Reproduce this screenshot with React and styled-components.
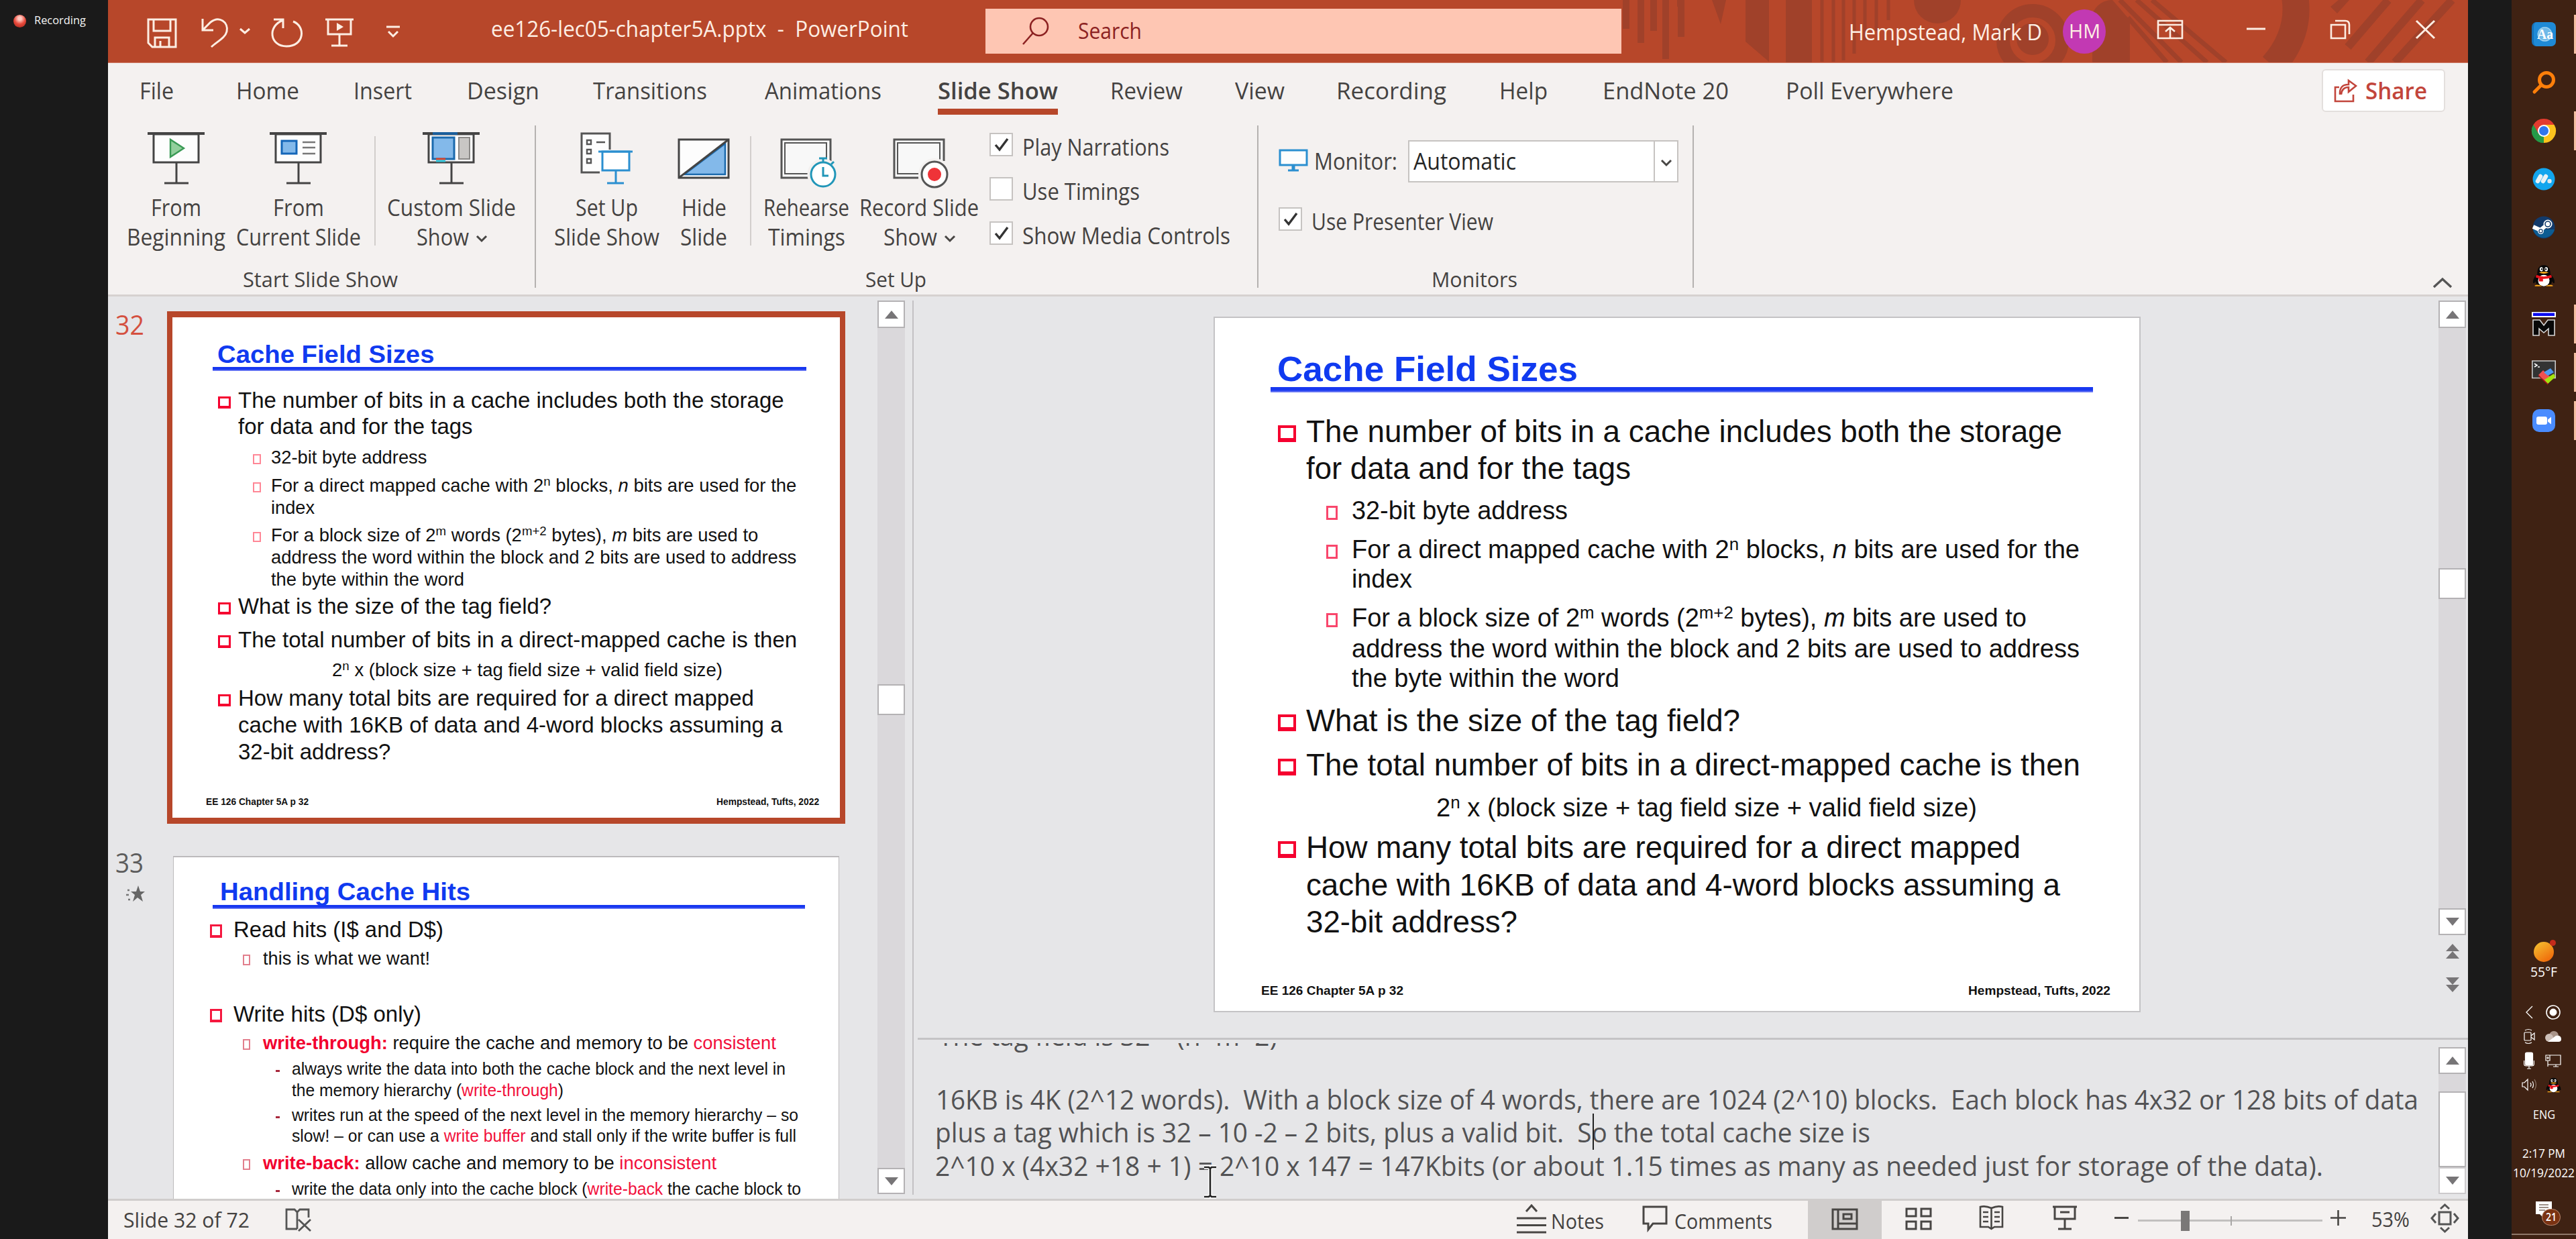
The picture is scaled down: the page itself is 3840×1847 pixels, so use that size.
import React, { useLayoutEffect, useRef, useState } from "react";
import styled, { createGlobalStyle, css } from "styled-components";

const UI = '"Open Sans", "Noto Sans", sans-serif';
const ARIAL = '"Liberation Sans", Arial, sans-serif';

const Global = createGlobalStyle`
  * { box-sizing: border-box; }
  html, body { margin: 0; padding: 0; background: #1a1a1a; }
  body { font-family: ${UI}; overflow: hidden; }
  :root { --u: 1px; }
`;

/* ---------- text that fills a known measure ---------- */
const TextBox = styled.span`
  display: block;
  flex: none;
  width: calc(var(--u) * ${(p) => p.$w});
  margin-left: calc(var(--u) * ${(p) => p.$ml || 0});
  margin-top: calc(var(--u) * ${(p) => p.$mt || 0});
  font-size: calc(var(--u) * ${(p) => p.$fs || 34});
  line-height: calc(var(--u) * ${(p) => p.$lh || 44});
  height: calc(var(--u) * ${(p) => p.$lh || 44});
  font-weight: ${(p) => p.$weight || 400};
  color: ${(p) => p.$color || "inherit"};
  white-space: pre;
`;
const TextRun = styled.span`
  display: inline-block;
  transform-origin: 0 50%;
  sup { font-size: 0.68em; line-height: 0; vertical-align: 0.46em; }
  em { font-style: italic; }
  b { color: #f2002e; }
  i { font-style: normal; color: #f2103c; }
`;
function T({ w, ml, mt, fs, lh, weight, color, children }) {
  const box = useRef(null);
  const run = useRef(null);
  const [k, setK] = useState(1);
  useLayoutEffect(() => {
    const target = parseFloat(getComputedStyle(box.current).width);
    const natural = parseFloat(getComputedStyle(run.current).width);
    if (natural > 0) setK(target / natural);
  }, []);
  return (
    <TextBox ref={box} $w={w} $ml={ml} $mt={mt} $fs={fs} $lh={lh} $weight={weight} $color={color}>
      <TextRun ref={run} style={{ transform: `scaleX(${k})` }}>{children}</TextRun>
    </TextBox>
  );
}

const Icon = styled.svg`
  display: block;
  flex: none;
  overflow: visible;
  margin-left: ${(p) => p.$ml || 0}px;
  margin-top: ${(p) => p.$mt || 0}px;
  fill: none;
`;

/* ---------- page frame ---------- */
const Desktop = styled.div`
  display: grid;
  grid-template-columns: 161px 3518px 65px 96px;
  width: 3840px;
  height: 1847px;
  background: #1a1a1a;
`;
const RecordingStrip = styled.aside`
  display: flex;
  padding: 18px 0 0 20px;
  color: #f4f4f4;
`;
const RecDot = styled.span`
  width: 19px;
  height: 19px;
  margin: 4px 12px 0 0;
  border-radius: 50%;
  background: radial-gradient(circle at 50% 30%, #ffc9c0 0 15%, #e8493b 50%, #9c2319 100%);
`;
const Window = styled.main`
  display: flex;
  flex-direction: column;
  height: 1847px;
  overflow: hidden;
  background: #f4f1f0;
  color: #444241;
`;

/* ---------- title bar ---------- */
const TitleBar = styled.header`
  position: relative;
  display: flex;
  align-items: flex-start;
  height: 94px;
  background: #b7472a;
  border-bottom: 1px solid #cf7d68;
  color: #fdeee3;
`;
const Pattern = styled.svg`
  position: absolute;
  left: 2256px;
  top: 0;
  width: 1262px;
  height: 93px;
`;
const QuickAccess = styled.div`
  position: relative;
  display: flex;
  padding-left: 58px;
  width: 571px;
`;
const SearchBox = styled.div`
  position: relative;
  display: flex;
  width: 948px;
  height: 67px;
  margin: 13px 0 0 115px;
  background: #fec6b3;
`;
const Account = styled.div`
  position: relative;
  display: flex;
  margin-left: 339px;
`;
const Avatar = styled.span`
  display: flex;
  justify-content: center;
  width: 64px;
  height: 66px;
  margin: 14px 0 0 31px;
  border-radius: 50%;
  background: #c239b3;
`;

function TitlePattern() {
  return (
    <Pattern viewBox="2417 0 1262 93" fill="none">
      <g stroke="#a0412a" strokeWidth="10">
        <path d="M2424 0V43M2446 0V64M2465 0V46M2483 0V88M2506 0V55" />
        <path d="M2716 0V92M2733 0V92M2748 0V90M2764 0V80M2780 0V60M2797 0V46M2815 0V30" strokeWidth="5" />
        <path d="M3185 0L3290 93M3208 0L3318 93M3160 0L3252 93M3172 26L3230 93" strokeWidth="7" />
        <path d="M3530 93L3610 0M3570 93L3655 0M3500 70L3560 0" strokeWidth="12" />
      </g>
      <g fill="#a0412a">
        <path d="M2552 0h21l-8 36zM2602 0h35v92l-35-30zM2662 0h39v93h-39zM2500 0h8v10h-8z" />
        <circle cx="2888" cy="0" r="35" />
        <path d="M3119 93V20q10-20 30-20l26 30V93z" />
        <path d="M3474 10L3486 0h16l-18 20z" />
      </g>
      <circle cx="3030" cy="60" r="44" stroke="#a0412a" strokeWidth="20" />
      <circle cx="3030" cy="58" r="24" fill="#a0412a" />
      <path d="M3421 -5Q3430 50 3388 98" stroke="#a0412a" strokeWidth="40" />
    </Pattern>
  );
}

function TitleRow() {
  return (
    <TitleBar>
      <TitlePattern />
      <QuickAccess>
        <Icon width="45" height="45" $mt={27} stroke="#fdeee3" strokeWidth="3">
          <path d="M2 2H43V43H8L2 37ZM10 2V19H35V2M12 43V29H33V43M20 43V34" />
        </Icon>
        <Icon width="42" height="44" $ml={35} $mt={27} stroke="#fdeee3" strokeWidth="3">
          <path d="M3 1V18H19M3 18L15 6C28 -4 42 6 39 20C37 29 26 34 16 43" />
        </Icon>
        <Icon width="16" height="8" $ml={16} $mt={42} stroke="#fdeee3" strokeWidth="3">
          <path d="M1 1L8 7L15 1" />
        </Icon>
        <Icon width="47" height="44" $ml={31} $mt={27} stroke="#fdeee3" strokeWidth="3">
          <path d="M4 2H18V15M18 3C-6 12 -2 42 23 42C50 42 52 12 33 5" />
        </Icon>
        <Icon width="42" height="42" $ml={34} $mt={27} stroke="#fdeee3" strokeWidth="3">
          <path d="M0 2H42M4 2V24H38V2M21 24V41M9 41H33" />
          <path d="M17 7V19L27 13Z" fill="#fdeee3" stroke="none" />
        </Icon>
        <Icon width="20" height="18" $ml={49} $mt={38} stroke="#fdeee3" strokeWidth="3">
          <path d="M0 2H20M3 9L10 16L17 9" />
        </Icon>
      </QuickAccess>
      <T w={622} mt={21} fs={32}>{"ee126-lec05-chapter5A.pptx  -  PowerPoint"}</T>
      <SearchBox>
        <Icon width="40" height="42" $ml={55} $mt={13} stroke="#8c2222" strokeWidth="2.6">
          <circle cx="25" cy="14" r="13" />
          <path d="M16 23L1 40" />
        </Icon>
        <T w={95} ml={43} mt={11} fs={33} color="#8c2222">Search</T>
      </SearchBox>
      <Account>
        <T w={288} mt={26} fs={33}>Hempstead, Mark D</T>
        <Avatar><T w={47} mt={10} fs={30}>HM</T></Avatar>
        <Icon width="38" height="28" $ml={77} $mt={30} stroke="#fdeee3" strokeWidth="2.6">
          <path d="M1 1H37V27H1ZM1 7H37M19 26V11M12 17L19 11L26 17" />
        </Icon>
        <Icon width="28" height="4" $ml={95} $mt={41} stroke="#fdeee3" strokeWidth="3"><path d="M0 2H28" /></Icon>
        <Icon width="30" height="28" $ml={97} $mt={30} stroke="#fdeee3" strokeWidth="2.6">
          <path d="M1 7H22V27H1ZM7 1H22Q28 1 28 7V21" />
        </Icon>
        <Icon width="29" height="27" $ml={97} $mt={30} stroke="#fdeee3" strokeWidth="3"><path d="M1 1L28 27M28 1L1 27" /></Icon>
      </Account>
    </TitleBar>
  );
}

/* ---------- tabs ---------- */
const TabRow = styled.nav`
  display: flex;
  height: 93px;
  flex: none;
`;
const Tab = styled.div`
  flex: none;
  margin-left: ${(p) => p.$gap}px;
  padding-top: 19px;
  &::after {
    content: "";
    display: block;
    height: 9px;
    margin-top: 4px;
    background: ${(p) => (p.$active ? "#b7472a" : "transparent")};
  }
`;
const ShareButton = styled.button`
  display: flex;
  flex: none;
  width: 184px;
  height: 64px;
  margin: 9px 0 0 549px;
  padding: 0;
  border: 2px solid #e3dfdd;
  border-radius: 6px;
  background: #fff;
  font-family: ${UI};
`;
const tabs = [
  ["File", 47, 51], ["Home", 93, 94], ["Insert", 81, 87], ["Design", 82, 108],
  ["Transitions", 80, 170], ["Animations", 86, 174], ["Slide Show", 84, 179],
  ["Review", 78, 108], ["View", 78, 74], ["Recording", 77, 164], ["Help", 79, 72],
  ["EndNote 20", 82, 188], ["Poll Everywhere", 85, 250],
];
function Tabs() {
  return (
    <TabRow>
      {tabs.map(([label, gap, w]) => (
        <Tab key={label} $gap={gap} $active={label === "Slide Show"}>
          <T w={w} lh={45} fs={34} weight={label === "Slide Show" ? 600 : 400}>{label}</T>
        </Tab>
      ))}
      <ShareButton>
        <Icon width="33" height="33" $ml={17} $mt={14} stroke="#c2453b" strokeWidth="2.6">
          <path d="M7 11H1V32H28V22M10 22Q11 11 21 11V18L32 9L21 1V7Q7 7 8 22" />
        </Icon>
        <T w={92} ml={13} mt={8} fs={34} weight={600} color="#c2453b">Share</T>
      </ShareButton>
    </TabRow>
  );
}

/* ---------- ribbon ---------- */
const Ribbon = styled.section`
  display: flex;
  flex: none;
  height: 255px;
  border-bottom: 3px solid #d6d2d0;
`;
const Group = styled.div`
  display: flex;
  flex-direction: column;
  flex: none;
  align-items: center;
  width: ${(p) => p.$w}px;
  padding-right: 3px;
`;
const GroupBody = styled.div`
  display: flex;
  flex: none;
  width: 100%;
  height: 209px;
  padding-left: ${(p) => p.$pad}px;
`;
const GroupRule = styled.i`
  flex: none;
  width: 2px;
  height: 242px;
  background: #b5b2b0;
`;
const InnerRule = styled.i`
  flex: none;
  width: 2px;
  height: 163px;
  margin: 16px 0 0 ${(p) => p.$ml}px;
  background: #d2cecc;
`;
const Command = styled.div`
  display: flex;
  flex-direction: column;
  flex: none;
  align-items: center;
  width: ${(p) => p.$w}px;
  margin-left: ${(p) => p.$ml || 0}px;
  padding-top: 10px;
`;
const Glyph = styled.div`
  display: flex;
  justify-content: center;
  height: 90px;
  margin-left: -1px;
`;
const LabelRow = styled.div`
  display: flex;
  height: 44px;
`;
const Checks = styled.div`
  display: flex;
  flex-direction: column;
  gap: 22px;
  margin-left: 16px;
  padding-top: 10px;
`;
const CheckRow = styled.label`
  display: flex;
  align-items: flex-start;
  height: 44px;
`;
const Box = styled.span`
  display: block;
  flex: none;
  width: 35px;
  height: 35px;
  margin: 1px 14px 0 0;
  border: 2px solid #c6c3c1;
  background: #fff;
`;
const MonitorPane = styled.div`
  display: flex;
  flex-direction: column;
`;
const MonitorRow = styled.div`
  display: flex;
  height: 121px;
  padding-top: 22px;
`;
const Combo = styled.div`
  display: flex;
  width: 403px;
  height: 63px;
  margin-left: 16px;
  border: 2px solid #c6c3c1;
  background: #fff;
  color: #262626;
`;
const ComboArrow = styled.span`
  display: flex;
  width: 36px;
  margin-left: 205px;
  border-left: 2px solid #c6c3c1;
`;
const Collapse = styled.div`
  margin: 227px 0 0 1102px;
`;

const Chevron = ({ ml, mt, w = 16, s = 3 }) => (
  <Icon width={w} height="9" $ml={ml} $mt={mt} stroke="#484644" strokeWidth={s}>
    <path d={`M1 1L${w / 2} 8L${w - 1} 1`} />
  </Icon>
);
const Check = ({ on, w, children }) => (
  <CheckRow>
    <Box>
      {on && (
        <Icon width="31" height="31" stroke="#333" strokeWidth="3.4"><path d="M7 16L13 23L25 7" /></Icon>
      )}
    </Box>
    <T w={w}>{children}</T>
  </CheckRow>
);

const Easel = ({ children }) => (
  <Icon width="85" height="78" stroke="#444" strokeWidth="3">
    <path d="M9 3H76V45H9Z" fill="#fdfdfd" />
    <path d="M0 2H85" strokeWidth="4" />
    <path d="M43 46V76M25 76H61" />
    {children}
  </Icon>
);

function RibbonBody() {
  return (
    <Ribbon>
      <Group $w={636}>
        <GroupBody $pad={28}>
          <Command $w={147}>
            <Glyph><Easel><path d="M34 11V37L54 24Z" fill="#92cf9c" stroke="#3a9a55" strokeWidth="2.4" /></Easel></Glyph>
            <T w={75}>From</T>
            <T w={147}>Beginning</T>
          </Command>
          <Command $w={186} $ml={16}>
            <Glyph>
              <Easel>
                <path d="M18 13H40V32H18Z" fill="#83b9ea" stroke="#1466b8" />
                <path d="M49 15H68M49 23H68M49 32H68" stroke="#777" strokeWidth="2.4" />
              </Easel>
            </Glyph>
            <T w={76}>From</T>
            <T w={186}>Current Slide</T>
          </Command>
          <InnerRule $ml={20} />
          <Command $w={192} $ml={17}>
            <Glyph>
              <Easel>
                <path d="M15 8H47V40H15Z" fill="#83b9ea" stroke="#1b6aad" />
                <path d="M54 8H70V40H54Z" fill="#c8c6c4" stroke="#8b8987" strokeWidth="2" />
                <path d="M15 2H52" stroke="#1b5f9c" strokeWidth="4" />
                <path d="M20 40H34" stroke="#d8432b" />
                <path d="M20 43H34" stroke="#35c9dd" />
              </Easel>
            </Glyph>
            <T w={192}>Custom Slide</T>
            <LabelRow><T w={78}>Show</T><Chevron ml={11} mt={20} /></LabelRow>
          </Command>
        </GroupBody>
        <T w={231} fs={31} lh={40}>Start Slide Show</T>
      </Group>
      <GroupRule />
      <Group $w={1075}>
        <GroupBody $pad={27}>
          <Command $w={157}>
            <Glyph>
              <Icon width="78" height="78" stroke="#555" strokeWidth="3">
                <path d="M29 60H2V2H44V26" fill="#fdfdfd" />
                <path d="M10 12H16V18H10ZM10 26H16V32H10ZM10 40H16V46H10ZM24 15H37" strokeWidth="2.4" />
                <g stroke="#2b8fd0"><path d="M33 29H73V57H33Z" fill="#fff" /><path d="M27 29H78M53 57V76M40 76H65" /></g>
              </Icon>
            </Glyph>
            <T w={93}>Set Up</T>
            <T w={157}>Slide Show</T>
          </Command>
          <Command $w={78} $ml={27}>
            <Glyph>
              <Icon width="78" height="61" $mt={9} strokeWidth="3">
                <path d="M2 2H76V59H2Z" fill="#fdfdfd" stroke="#444" />
                <path d="M10 54L71 8V54Z" fill="#83b9ea" stroke="#1b6aad" strokeWidth="2.6" />
                <path d="M2 59L76 2" stroke="#444" />
              </Icon>
            </Glyph>
            <T w={67}>Hide</T>
            <T w={70}>Slide</T>
          </Command>
          <InnerRule $ml={30} />
          <Command $w={128} $ml={18}>
            <Glyph>
              <Icon width="84" height="74" $ml={6} $mt={9} stroke="#555" strokeWidth="3">
                <path d="M44 59H2V2H75V36" fill="#f8f8f8" />
                <path d="M42 53H7V7H69V34" strokeWidth="2" />
                <g stroke="#2196b8">
                  <circle cx="64" cy="54" r="22" fill="#f4f1f0" stroke="#f4f1f0" />
                  <circle cx="64" cy="54" r="18" fill="#fff" />
                  <path d="M64 35V29M58 30H70M76 39L80 35M64 43V56H72" />
                </g>
              </Icon>
            </Glyph>
            <T w={128}>Rehearse</T>
            <T w={115}>Timings</T>
          </Command>
          <Command $w={178} $ml={15}>
            <Glyph>
              <Icon width="83" height="74" $ml={5} $mt={9} stroke="#555" strokeWidth="3">
                <path d="M38 59H2V2H76V34" fill="#f8f8f8" />
                <path d="M38 53H7V7H70V34" strokeWidth="2" />
                <circle cx="62" cy="54" r="24" fill="#f4f1f0" stroke="none" />
                <circle cx="62" cy="54" r="19" fill="#fff" />
                <circle cx="62" cy="54" r="10" fill="#ef3338" stroke="none" />
              </Icon>
            </Glyph>
            <T w={178}>Record Slide</T>
            <LabelRow><T w={80}>Show</T><Chevron ml={11} mt={20} /></LabelRow>
          </Command>
          <Checks>
            <Check on w={219}>Play Narrations</Check>
            <Check w={175}>Use Timings</Check>
            <Check on w={310}>Show Media Controls</Check>
          </Checks>
        </GroupBody>
        <T w={91} fs={31} lh={40}>Set Up</T>
      </Group>
      <GroupRule />
      <Group $w={647}>
        <GroupBody $pad={30}>
          <MonitorPane>
            <MonitorRow>
              <Icon width="44" height="34" $mt={13} stroke="#2b8fd0" strokeWidth="3">
                <path d="M2 2H42V24H2Z" fill="#fdfdfd" /><path d="M22 24V32" strokeWidth="5" /><path d="M14 32H30" />
              </Icon>
              <T w={124} ml={9} mt={9}>Monitor:</T>
              <Combo>
                <T w={153} ml={6} mt={7}>Automatic</T>
                <ComboArrow><Chevron ml={9} mt={27} /></ComboArrow>
              </Combo>
            </MonitorRow>
            <Check on w={271}>Use Presenter View</Check>
          </MonitorPane>
        </GroupBody>
        <T w={128} fs={31} lh={40}>Monitors</T>
      </Group>
      <GroupRule />
      <Collapse>
        <Icon width="28" height="15" stroke="#555" strokeWidth="3.4"><path d="M1 14L14 2L27 14" /></Icon>
      </Collapse>
    </Ribbon>
  );
}

/* ---------- slides ---------- */
const SlideSheet = styled.article`
  --u: ${(p) => p.$u}px;
  width: calc(var(--u) * ${(p) => p.$w});
  height: calc(var(--u) * ${(p) => p.$h});
  flex: none;
  overflow: hidden;
  background: #fff;
  color: #111;
  font-family: ${ARIAL};
`;
const Heading = styled.div`
  padding: calc(var(--u) * ${(p) => p.$top}) 0 0 calc(var(--u) * ${(p) => p.$x});
`;
const Rule = styled.div`
  width: calc(var(--u) * ${(p) => p.$w});
  height: calc(var(--u) * ${(p) => p.$h});
  margin: calc(var(--u) * ${(p) => p.$mt || 0}) 0 0 calc(var(--u) * ${(p) => p.$x});
  background: linear-gradient(#1838f0 60%, #8b93f6);
`;
const Line = styled.div`
  display: flex;
  align-items: flex-start;
  margin-top: calc(var(--u) * ${(p) => p.$mt || 0});
`;
const Bullet = styled.i`
  flex: none;
  width: calc(var(--u) * ${(p) => p.$w});
  height: calc(var(--u) * ${(p) => p.$h});
  margin: calc(var(--u) * ${(p) => p.$y}) 0 0 calc(var(--u) * ${(p) => p.$x});
  ${(p) =>
    p.$kind === "dash"
      ? css`background: #a8283c;`
      : css`border: calc(var(--u) * ${p.$s}) solid ${p.$color}; border-bottom-width: calc(var(--u) * ${p.$s * (p.$kind === "major" ? 1.5 : 1)});`}
`;
const Foot = styled.footer`
  display: flex;
  justify-content: space-between;
  margin: calc(var(--u) * 64) calc(var(--u) * 43) 0 calc(var(--u) * 69);
`;

const big = {
  1: { fs: 46.5, lh: 54, text: 135.5, bullet: { x: 94, y: 18, w: 27, h: 25, s: 4.2, kind: "major", color: "#f5002f" } },
  2: { fs: 38, lh: 44, text: 203.5, bullet: { x: 166, y: 15, w: 17, h: 21, s: 3, kind: "minor", color: "#f9466c" } },
};
const small = {
  1: { fs: 33, lh: 38, text: 89, bullet: { x: 53.5, y: 11, w: 18, h: 20, s: 3, kind: "major", color: "#f5183f" } },
  2: { fs: 27, lh: 32, text: 133, bullet: { x: 103, y: 10, w: 11, h: 16, s: 2, kind: "minor", color: "#e27f8d" } },
  3: { fs: 26, lh: 31, text: 176, bullet: { x: 152, y: 17, w: 6, h: 3, s: 1, kind: "dash", color: "#a8283c" } },
};
function Para({ set, lv, mt, w, dot, x, color, children }) {
  const m = set[lv];
  const b = m.bullet;
  const left = x || m.text;
  return (
    <Line $mt={mt}>
      {dot && <Bullet $x={b.x} $y={b.y} $w={b.w} $h={b.h} $s={b.s} $kind={b.kind} $color={color || b.color} />}
      <T w={w} ml={dot ? left - b.x - b.w : left} fs={m.fs} lh={m.lh}>{children}</T>
    </Line>
  );
}

function CacheFieldSlide({ u }) {
  const mini = u < 1;
  const minor = mini ? "#ff8796" : undefined;
  return (
    <SlideSheet $u={u} $w={1378} $h={1033}>
      <Heading $top={49.6} $x={93}><T w={448} fs={52} lh={53} weight={700} color="#103af0">Cache Field Sizes</T></Heading>
      <Rule $w={1226} $h={8} $x={83} />
      <Para set={big} lv={1} dot mt={mini ? 34.3 : 31.5} w={1127}>The number of bits in a cache includes both the storage</Para>
      <Para set={big} lv={1} mt={0.5} w={484}>for data and for the tags</Para>
      <Para set={big} lv={2} dot color={minor} mt={14} w={322}>32-bit byte address</Para>
      <Para set={big} lv={2} dot color={minor} mt={14} w={1085}>For a direct mapped cache with 2<sup>n</sup> blocks, <em>n</em> bits are used for the</Para>
      <Para set={big} lv={2} mt={mini ? 1.5 : 0} w={90}>index</Para>
      <Para set={big} lv={2} dot color={minor} mt={mini ? 13 : 14} w={1006}>For a block size of 2<sup>m</sup> words (2<sup>m+2</sup> bytes), <em>m</em> bits are used to</Para>
      <Para set={big} lv={2} mt={2} w={1085}>address the word within the block and 2 bits are used to address</Para>
      <Para set={big} lv={2} mt={mini ? 1 : 0} w={399}>the byte within the word</Para>
      <Para set={big} lv={1} dot mt={mini ? 8.5 : 14.5} w={647}>What is the size of the tag field?</Para>
      <Para set={big} lv={1} dot mt={mini ? 14 : 12} w={1154}>The total number of bits in a direct-mapped cache is then</Para>
      <Para set={big} lv={2} mt={mini ? 12.5 : 14.5} x={329.5} w={806}>2<sup>n</sup> x (block size + tag field size + valid field size)</Para>
      <Para set={big} lv={1} dot mt={10.5} w={1065}>How many total bits are required for a direct mapped</Para>
      <Para set={big} lv={1} mt={1.5} w={1124}>cache with 16KB of data and 4-word blocks assuming a</Para>
      <Para set={big} lv={1} mt={1.5} w={315}>32-bit address?</Para>
      <Foot>
        <T w={212} fs={19} lh={24} weight={700}>EE 126 Chapter 5A p 32</T>
        <T w={212} fs={19} lh={24} weight={700}>Hempstead, Tufts, 2022</T>
      </Foot>
    </SlideSheet>
  );
}

function CacheHitsSlide() {
  return (
    <SlideSheet $u={1} $w={991} $h={744}>
      <Heading $top={33} $x={69}><T w={373} fs={37} lh={38} weight={700} color="#103af0">Handling Cache Hits</T></Heading>
      <Rule $w={883} $h={6} $x={58} />
      <Para set={small} lv={1} dot mt={12} w={313}>Read hits (I$ and D$)</Para>
      <Para set={small} lv={2} dot mt={8} w={249}>this is what we want!</Para>
      <Para set={small} lv={1} dot mt={48} w={280}>Write hits (D$ only)</Para>
      <Para set={small} lv={2} dot mt={8.5} w={765}><b>write-through:</b> require the cache and memory to be <i>consistent</i></Para>
      <Para set={small} lv={3} dot mt={6.5} w={736}>always write the data into both the cache block and the next level in</Para>
      <Para set={small} lv={3} mt={1} w={405}>the memory hierarchy (<i>write-through</i>)</Para>
      <Para set={small} lv={3} dot mt={6} w={755}>writes run at the speed of the next level in the memory hierarchy – so</Para>
      <Para set={small} lv={3} w={752}>slow! – or can use a <i>write buffer</i> and stall only if the write buffer is full</Para>
      <Para set={small} lv={2} dot mt={9} w={676}><b>write-back:</b> allow cache and memory to be <i>inconsistent</i></Para>
      <Para set={small} lv={3} dot mt={7.5} w={759}>write the data only into the cache block (<i>write-back</i> the cache block to</Para>
    </SlideSheet>
  );
}

/* ---------- work area ---------- */
const Work = styled.div`
  display: flex;
  flex: none;
  height: 1345px;
  background: #e6e6e8;
  overflow: hidden;
`;
const ThumbPane = styled.section`
  display: flex;
  flex: none;
  width: 1199px;
`;
const ThumbList = styled.div`
  width: 1147px;
  height: 1345px;
  overflow: hidden;
`;
const ThumbRow = styled.div`
  display: flex;
  align-items: flex-start;
  padding-top: ${(p) => p.$top}px;
`;
const ThumbIndex = styled.div`
  width: ${(p) => p.$w}px;
  flex: none;
  padding-left: 11px;
`;
const Thumb = styled.div`
  flex: none;
  border-style: solid;
  border-width: ${(p) => (p.$active ? "9px 8px" : "2px 1px")};
  border-color: ${(p) => (p.$active ? "#b7472a" : "#bcbabc")};
`;
const ScrollBar = styled.div`
  display: flex;
  flex-direction: column;
  flex: none;
  width: 41px;
  height: ${(p) => p.$h}px;
  margin-top: ${(p) => p.$mt}px;
  background: #dad8db;
`;
const ScrollButton = styled.span`
  display: flex;
  justify-content: center;
  align-items: center;
  flex: none;
  height: ${(p) => p.$h}px;
  border: 2px solid ${(p) => p.$edge || "#b4b2b4"};
  background: #fff;
`;
const Space = styled.i`
  flex: none;
  height: ${(p) => p.$h}px;
`;
const PaneRule = styled.i`
  flex: none;
  width: 2px;
  height: 1333px;
  margin-top: 6px;
  background: #c3c1c4;
`;
const EditPane = styled.section`
  display: flex;
  flex-direction: column;
  flex: none;
  width: 2317px;
`;
const Stage = styled.div`
  display: flex;
  height: 1105px;
`;
const StageSlide = styled.div`
  flex: none;
  width: 1378px;
  height: 1033px;
  margin: 32px 446px 0 449px;
  outline: 2px solid #c4c3c5;
`;
const Splitter = styled.div`
  height: 3px;
  margin-left: 6px;
  background: #c4c3c5;
`;
const Notes = styled.div`
  position: relative;
  display: flex;
  height: 237px;
  padding-top: 5px;
  color: #525254;
`;
const NotesText = styled.div`
  width: 2273px;
  height: 231px;
  padding-left: 32px;
  overflow: hidden;
`;
const Caret = styled.i`
  position: absolute;
  left: 1012px;
  top: 110px;
  width: 2px;
  height: 54px;
  background: #222;
`;
const Pointer = styled.svg`
  position: absolute;
  left: 431px;
  top: 187px;
  width: 22px;
  height: 50px;
`;
const SideColumn = styled.div`
  width: 41px;
`;
const Jumps = styled.div`
  display: flex;
  flex-direction: column;
  align-items: center;
  gap: 28px;
  padding-top: 13px;
`;

const Up = () => <Icon width="20" height="12"><path d="M0 12L10 0L20 12Z" fill="#777577" /></Icon>;
const Down = () => <Icon width="20" height="12"><path d="M0 0L10 12L20 0Z" fill="#777577" /></Icon>;

function WorkArea() {
  return (
    <Work>
      <ThumbPane>
        <ThumbList>
          <ThumbRow $top={22}>
            <ThumbIndex $w={88}><T w={43} fs={40} mt={-2} color="#d4503f">32</T></ThumbIndex>
            <Thumb $active><CacheFieldSlide u={0.722} /></Thumb>
          </ThumbRow>
          <ThumbRow $top={48}>
            <ThumbIndex $w={97}>
              <T w={42} fs={40} mt={-12} color="#5d5d5d">33</T>
              <Icon width="28" height="24" $ml={16} $mt={12}>
                <path d="M18 0L21 9H28L22 14L25 24L17 18L10 24L13 14L7 9H15Z" fill="#666" />
                <path d="M2 7H5M0 14H4M3 21H6" stroke="#777" strokeWidth="2.4" />
              </Icon>
            </ThumbIndex>
            <Thumb><CacheHitsSlide /></Thumb>
          </ThumbRow>
        </ThumbList>
        <ScrollBar $h={1332} $mt={6}>
          <ScrollButton $h={41}><Up /></ScrollButton>
          <Space $h={531} />
          <ScrollButton $h={46} />
          <Space $h={675} />
          <ScrollButton $h={39}><Down /></ScrollButton>
        </ScrollBar>
      </ThumbPane>
      <PaneRule />
      <EditPane>
        <Stage>
          <StageSlide><CacheFieldSlide u={1} /></StageSlide>
          <SideColumn>
            <ScrollBar $h={946} $mt={6}>
              <ScrollButton $h={41}><Up /></ScrollButton>
              <Space $h={358} />
              <ScrollButton $h={46} />
              <Space $h={461} />
              <ScrollButton $h={40}><Down /></ScrollButton>
            </ScrollBar>
            <Jumps>
              <Icon width="20" height="22"><path d="M0 11L10 0L20 11ZM0 22L10 11L20 22Z" fill="#777577" /></Icon>
              <Icon width="20" height="22"><path d="M0 0L10 11L20 0ZM0 11L10 22L20 11Z" fill="#777577" /></Icon>
            </Jumps>
          </SideColumn>
        </Stage>
        <Splitter />
        <Notes>
          <NotesText>
            <T w={505} ml={5} mt={-36.5} fs={41} lh={49.4}>The tag field is 32 – (n+m+2)</T>
            <T w={2210} ml={1} mt={46.2} fs={41} lh={49.4}>{"16KB is 4K (2^12 words).  With a block size of 4 words, there are 1024 (2^10) blocks.  Each block has 4x32 or 128 bits of data"}</T>
            <T w={1394} fs={41} lh={49.4}>{"plus a tag which is 32 – 10 -2 – 2 bits, plus a valid bit.  So the total cache size is"}</T>
            <T w={2069} fs={41} lh={49.4}>2^10 x (4x32 +18 + 1) = 2^10 x 147 = 147Kbits (or about 1.15 times as many as needed just for storage of the data).</T>
          </NotesText>
          <ScrollBar $h={219} $mt={6}>
            <ScrollButton $h={40}><Up /></ScrollButton>
            <Space $h={26} />
            <ScrollButton $h={113} />
            <ScrollButton $h={40} $edge="#cccacc"><Down /></ScrollButton>
          </ScrollBar>
          <Caret />
          <Pointer viewBox="0 0 22 50" fill="none">
            <path d="M2 3H9L11 5L13 3H20M11 5V45M2 47H9L11 45L13 47H20" stroke="#fff" strokeWidth="6" />
            <path d="M2 3H9L11 5L13 3H20M11 5V45M2 47H9L11 45L13 47H20" stroke="#222" strokeWidth="2.6" />
          </Pointer>
        </Notes>
      </EditPane>
    </Work>
  );
}

/* ---------- status bar ---------- */
const StatusBar = styled.footer`
  display: flex;
  flex: none;
  height: 60px;
  border-top: 3px solid #d0cdcc;
  background: #f4f1f0;
`;
const ViewGap = styled.i`
  flex: none;
  width: 53px;
`;
const ViewButton = styled.span`
  display: flex;
  flex: none;
  width: 110px;
  height: 57px;
  background: ${(p) => (p.$active ? "#d0cdcc" : "transparent")};
`;
const Zoom = styled.div`
  display: flex;
  align-items: center;
  width: 275px;
  height: 3px;
  margin: 28px 0 0 14px;
  background: #c2c0bf;
`;
const ZoomThumb = styled.i`
  width: 13px;
  height: 30px;
  margin-left: 64px;
  background: #7a7877;
`;
const ZoomTick = styled.i`
  width: 2px;
  height: 14px;
  margin-left: 61px;
  background: #a9a7a6;
`;

function Status() {
  return (
    <StatusBar>
      <T w={188} ml={23} mt={6} fs={31}>Slide 32 of 72</T>
      <Icon width="40" height="35" $ml={53} $mt={11} stroke="#555" strokeWidth="2.8">
        <path d="M18 31H2V2H14L18 6L22 2H35V14M18 6V31M20 17L38 34M38 17L20 34" />
      </Icon>
      <Icon width="44" height="44" $ml={1796} $mt={5} stroke="#484644" strokeWidth="3">
        <path d="M0 21H44M0 31.500H44M0 42H44M14 11L22 2L30 11" />
      </Icon>
      <T w={79} ml={7} mt={8} fs={31}>Notes</T>
      <Icon width="38" height="38" $ml={57} $mt={7} stroke="#484644" strokeWidth="3">
        <path d="M2 2H36V27H16L9 36V27H2Z" />
      </Icon>
      <T w={146} ml={10} mt={8} fs={31}>Comments</T>
      <ViewGap />
      <ViewButton $active>
        <Icon width="40" height="33" $ml={35} $mt={11} stroke="#484644" strokeWidth="3">
          <path d="M2 2H38V31H2ZM10 2V31M10 23H38M18 9H30V16H18Z" />
        </Icon>
      </ViewButton>
      <ViewButton>
        <Icon width="40" height="34" $ml={35} $mt={10} stroke="#484644" strokeWidth="3">
          <path d="M2 2H16V13H2ZM24 2H38V13H24ZM2 21H16V32H2ZM24 21H38V32H24Z" />
        </Icon>
      </ViewButton>
      <ViewButton>
        <Icon width="37" height="36" $ml={35} $mt={7} stroke="#484644" strokeWidth="2.6">
          <path d="M18.500 4Q10 0 2 2V32H14L18.500 35L23 32H35V2Q27 0 18.500 4V34M6 10H14M6 17H14M6 24H14M23 10H31M23 17H31M23 24H31" />
        </Icon>
      </ViewButton>
      <ViewButton>
        <Icon width="36" height="36" $ml={35} $mt={7} stroke="#484644" strokeWidth="3">
          <path d="M0 2H36M3 2V20H33V2M11 10H25M18 20V35M8 35H28" />
        </Icon>
      </ViewButton>
      <Icon width="21" height="3" $ml={17} $mt={24} stroke="#484644" strokeWidth="3"><path d="M0 1.500H21" /></Icon>
      <Zoom><ZoomThumb /><ZoomTick /></Zoom>
      <Icon width="23" height="23" $ml={12} $mt={14} stroke="#484644" strokeWidth="2.600"><path d="M0 11.500H23M11.500 0V23" /></Icon>
      <T w={57} ml={38} mt={5} fs={31}>53%</T>
      <Icon width="41" height="41" $ml={32} $mt={5} stroke="#555" strokeWidth="3">
        <path d="M12 12H29V30H12ZM14 7L20.500 1L27 7M14 35L20.500 41L27 35M7 14L1 21L7 28M34 14L40 21L34 28" />
      </Icon>
    </StatusBar>
  );
}

/* ---------- desktop taskbar ---------- */
const TaskBar = styled.aside`
  display: flex;
  flex-direction: column;
  align-items: center;
  height: 1847px;
  padding-top: 15px;
  overflow: hidden;
  background: #3f2213;
  color: #fff;
`;
const TaskCell = styled.div`
  display: flex;
  flex: none;
  align-items: center;
  justify-content: center;
  width: 96px;
  height: 72px;
`;
const TaskIcon = styled.div`
  display: flex;
  justify-content: center;
  align-items: center;
  width: 96px;
  height: 58px;
  padding-left: ${(p) => (p.$open ? 3 : 0)}px;
  border-right: ${(p) => (p.$open ? "3px solid #f4bfa2" : "none")};
`;
const Weather = styled.div`
  display: flex;
  flex-direction: column;
  align-items: center;
  margin-top: 738px;
`;
const Tray = styled.div`
  display: grid;
  grid-template-columns: 36px 36px;
  grid-auto-rows: 36px;
  place-items: center;
  margin: 30px 8px 14px 0;
`;
const Badge = styled.span`
  position: absolute;
  left: 9px;
  top: 11px;
  display: flex;
  justify-content: center;
  width: 28px;
  height: 25px;
  border: 1px solid #b98a72;
  border-radius: 13px;
  background: #7b3212;
`;
const Alerts = styled.div`
  position: relative;
  width: 24px;
  height: 38px;
  margin-top: 31px;
`;
const Baseline = styled.div`
  flex: none;
  width: 96px;
  height: 2px;
  margin-top: 10px;
  background: #8f7869;
`;

const Penguin = ({ s }) => (
  <Icon width={s} height={s} viewBox="0 0 28 28">
    <path d="M14 1C7 1 6 7 6 12C3 15 0 19 1 23C2 24 3 22 4 21C5 27 9 27 14 27S23 27 24 21C25 22 26 24 27 23C28 19 25 15 22 12C22 7 21 1 14 1Z" fill="#080808" />
    <ellipse cx="14" cy="20" rx="7" ry="7" fill="#fff" />
    <path d="M5 13Q14 17 23 13L24 16Q14 20 4 16ZM8 16H13V21H8Z" fill="#e8121c" />
    <ellipse cx="11" cy="6" rx="2" ry="2.600" fill="#fff" /><ellipse cx="17" cy="6" rx="2" ry="2.600" fill="#fff" />
    <circle cx="11.500" cy="6" r="1" fill="#111" /><circle cx="16.500" cy="6" r="1" fill="#111" />
    <path d="M8 10Q14 8 20 10Q14 13 8 10ZM3 26Q7 24 12 27H3ZM25 26Q21 24 16 27H25Z" fill="#f9a61a" />
  </Icon>
);
const DictionaryTile = styled.div`
  display: flex;
  justify-content: center;
  width: 36px;
  height: 36px;
  border-radius: 7px;
  background: radial-gradient(circle, #6fb9e8 0 9px, #b6def5 10px, #1f8ad6 11.5px);
  border-left: 3px solid #1672b8;
  font-family: "Liberation Serif", serif;
`;

function Apps() {
  return (
    <>
      <TaskCell><TaskIcon $open><DictionaryTile><T w={24} fs={22} lh={36} weight={700}>Aa</T></DictionaryTile></TaskIcon></TaskCell>
      <TaskCell><TaskIcon>
        <Icon width="34" height="34" stroke="#ff7f0a"><circle cx="21" cy="13" r="10.500" strokeWidth="5" /><path d="M13 21L3 31" strokeWidth="5" strokeLinecap="round" /></Icon>
      </TaskIcon></TaskCell>
      <TaskCell><TaskIcon $open>
        <Icon width="36" height="36" viewBox="0 0 36 36">
          <path d="M18 18L2.400 9A18 18 0 0 1 33.600 9Z" fill="#e23b2e" />
          <path d="M18 18L33.600 9A18 18 0 0 1 18 36Z" fill="#fcc31e" />
          <path d="M18 18L18 36A18 18 0 0 1 2.400 9Z" fill="#259a48" />
          <path d="M18 9H33.600L26 22.500Z" fill="#fcc31e" /><path d="M10 22.500L2.400 9L18 9Z" fill="#e23b2e" />
          <path d="M2.400 9L10.200 22.500L18 27L18 36A18 18 0 0 1 2.400 9Z" fill="#259a48" />
          <path d="M25.800 22.500L18 36V27Z" fill="#fcc31e" />
          <circle cx="18" cy="18" r="9" fill="#fff" /><circle cx="18" cy="18" r="7" fill="#2f76ee" />
        </Icon>
      </TaskIcon></TaskCell>
      <TaskCell><TaskIcon>
        <Icon width="34" height="34"><circle cx="17" cy="17" r="16.500" fill="#12a5ee" />
          <path d="M8 20L12 13M16 20L20 13" stroke="#e9f2f6" strokeWidth="6.500" strokeLinecap="round" /><circle cx="25.500" cy="20" r="3.200" fill="#dfe9ee" />
        </Icon>
      </TaskIcon></TaskCell>
      <TaskCell><TaskIcon>
        <Icon width="34" height="34"><circle cx="17" cy="17" r="16.500" fill="#123a6b" /><path d="M1 20A16.500 16.500 0 0 0 33 20Z" fill="#0d5c92" />
          <path d="M1 16L12 21L23 12" stroke="#fff" strokeWidth="6" /><circle cx="12.500" cy="22.500" r="4.500" fill="#fff" /><circle cx="12.500" cy="22.500" r="2.600" stroke="#123a6b" strokeWidth="1.200" />
          <circle cx="23" cy="12" r="6.500" fill="#fff" /><circle cx="23" cy="12" r="4" fill="#fff" stroke="#123a6b" strokeWidth="1.600" />
        </Icon>
      </TaskIcon></TaskCell>
      <TaskCell><TaskIcon><Penguin s={34} /></TaskIcon></TaskCell>
      <TaskCell><TaskIcon $open>
        <Icon width="36" height="36"><path d="M0 0H36V8H0Z" fill="#fff" /><path d="M2 1.500H34V6H2Z" fill="#0b0bf0" />
          <path d="M2 12H12L18 20L24 12H34V35H25V25L18 31L11 25V35H2Z" fill="#080808" stroke="#d6d6d6" strokeWidth="1.600" />
        </Icon>
      </TaskIcon></TaskCell>
      <TaskCell><TaskIcon $open>
        <Icon width="36" height="36"><path d="M.8 1H35.200V26.500H.8Z" fill="#333" stroke="#c8c8c8" strokeWidth="1.600" />
          <path d="M4 5L8 7.500L4 10M9 10H12" stroke="#fff" strokeWidth="1.600" />
          <path d="M10 22L17 15L30 27L24 35Z" fill="#f0504f" /><path d="M18 18L28 12L33 18L24 23Z" fill="#4f9af0" />
          <path d="M19 29L33 20L35 25L24 35Z" fill="#a4e40c" /><path d="M10 22L24 35V37L10 24Z" fill="#a31515" />
        </Icon>
      </TaskIcon></TaskCell>
      <TaskCell><TaskIcon $open>
        <Icon width="34" height="34"><rect width="34" height="34" rx="10" fill="#4a8cff" />
          <rect x="6" y="11" width="16" height="12" rx="3" fill="#fff" /><path d="M23 15.500L28 11.500V22.500L23 18.500Z" fill="#fff" />
        </Icon>
      </TaskIcon></TaskCell>
    </>
  );
}

function SystemTray() {
  return (
    <>
      <Weather>
        <Icon width="30" height="36">
          <defs><linearGradient id="sun" x1="0" y1="0" x2=".7" y2="1"><stop stopColor="#f4c533" /><stop offset="1" stopColor="#f06a0a" /></linearGradient></defs>
          <circle cx="15" cy="18" r="15" fill="url(#sun)" /><circle cx="28.500" cy="4.500" r="4.500" fill="#c42b1c" />
        </Icon>
        <T w={40} fs={20} lh={24}>55°F</T>
      </Weather>
      <Tray>
        <Icon width="10" height="18" stroke="#fff" strokeWidth="1.300"><path d="M10 0L1 9L10 18" /></Icon>
        <Icon width="22" height="22" stroke="#fff"><circle cx="11" cy="11" r="10" strokeWidth="1.600" /><circle cx="11" cy="11" r="5" fill="#fff" /></Icon>
        <Icon width="18" height="22" stroke="#fff" strokeWidth="1.200"><rect x="2" y="5" width="10" height="12" rx="1" /><path d="M12 10L17 6V16L12 12M3 2Q8 -1 13 2M3 20Q8 23 13 20" /></Icon>
        <Icon width="24" height="16"><circle cx="13" cy="7" r="7" fill="#a99489" /><circle cx="6" cy="10" r="6" fill="#cdbfb8" /><path d="M4 16L16 7Q24 6 24 12Q24 16 20 16Z" fill="#fff" /></Icon>
        <Icon width="16" height="24" stroke="#fff" strokeWidth="1.200"><rect x="2.500" y="0" width="11" height="19" rx="2" fill="#fff" /><path d="M.6 12V17Q.6 20 4 20H12Q15.400 20 15.400 17V12M8 20V24M5 24H11" /></Icon>
        <Icon width="24" height="18" stroke="#fff" strokeWidth="1.200"><path d="M7 1H23V15H4M12 18H20M16 15V18M1 1H7V9H1ZM4 9V18M2 5H6M4 3V7" /></Icon>
        <Icon width="22" height="18" stroke="#fff" strokeWidth="1.200"><path d="M1 6H4L9 1V17L4 12H1ZM13 6Q15 9 13 12M16 4Q19 9 16 14" /><path d="M19 1Q24 9 19 17" stroke="#8f7869" /></Icon>
        <Penguin s={23} />
      </Tray>
      <T w={33} fs={18} lh={24}>ENG</T>
      <T w={64} mt={34} fs={18} lh={24}>2:17 PM</T>
      <T w={92} mt={5} fs={18} lh={24}>10/19/2022</T>
      <Alerts>
        <Icon width="24" height="24"><path d="M0 0H24V19H11L11 24L6 19H0Z" fill="#fff" /><path d="M5 5H19M5 9H19M5 13H14" stroke="#3f2213" strokeWidth="1.200" /></Icon>
        <Badge><T w={16} fs={16} lh={23} weight={600}>21</T></Badge>
      </Alerts>
      <Baseline />
    </>
  );
}

export default function App() {
  return (
    <>
      <Global />
      <Desktop>
        <RecordingStrip><RecDot /><T w={77} fs={17} lh={24}>Recording</T></RecordingStrip>
        <Window>
          <TitleRow />
          <Tabs />
          <RibbonBody />
          <WorkArea />
          <Status />
        </Window>
        <span />
        <TaskBar>
          <Apps />
          <SystemTray />
        </TaskBar>
      </Desktop>
    </>
  );
}
